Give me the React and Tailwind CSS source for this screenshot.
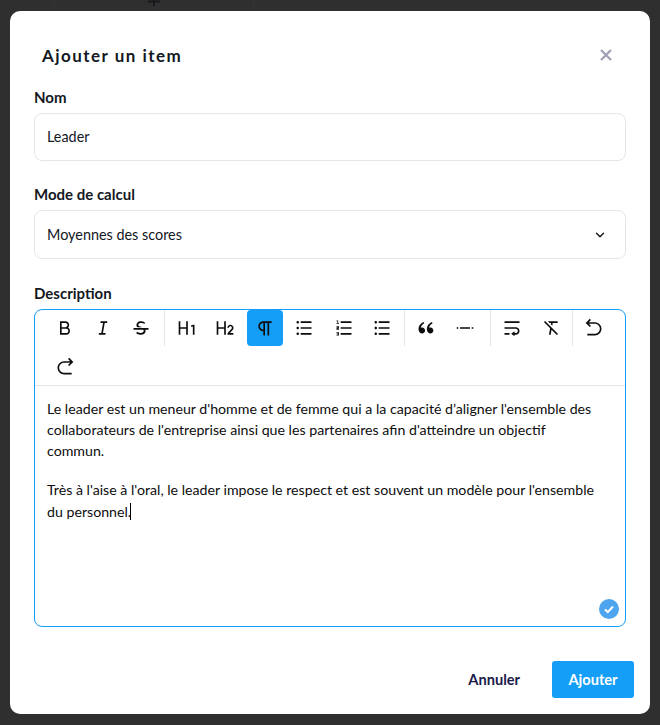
import React from "react";
import {
  RiBold, RiItalic, RiStrikethrough, RiH1, RiH2, RiParagraph, RiListUnordered, RiListOrdered,
  RiDoubleQuotesL, RiSeparator, RiTextWrap, RiFormatClear, RiArrowGoBackLine, RiArrowGoForwardLine,
} from "react-icons/ri";
import { ChevronDown } from "lucide-react";

const Btn = ({ Icon, active, className = "" }) => (
  <button className={`flex h-9 w-9 items-center justify-center rounded-[4px] text-[#0d0d0d] ${active ? "bg-[#159ef7]" : ""} ${className}`}>
    <Icon size={20} />
  </button>
);
const Sep = ({ className = "" }) => <div className={`h-9 w-px bg-[#e5e5e5] ${className}`} />;

export default function App() {
  return (
    <div className="relative h-[725px] w-[660px] overflow-hidden bg-[#2f2f2f] px-[10px] pt-[11px] font-['Lato',sans-serif] text-[#14181f]">
      <div className="absolute left-[54px] top-0 h-[11px] w-px bg-[#343434]" />
      <div className="absolute left-[253px] top-0 h-[11px] w-px bg-[#343434]" />
      <svg width="12" height="6" viewBox="0 0 12 6" className="absolute left-[148px] top-0 text-[#17191c]">
        <path d="M6 0v6M0 1.5h12" stroke="currentColor" strokeWidth="2" />
      </svg>
      <div className="h-[703px] w-[640px] rounded-[10px] bg-white px-6">
        <div className="flex h-[69px] items-center justify-between pl-2 pr-[14px] pt-[20px]">
          <h2 className="text-[17px] font-bold tracking-[1.47px]">Ajouter un item</h2>
          <svg width="12" height="12" viewBox="0 0 12 12" className="mt-[-1px] text-[#a1a1b8]">
            <path d="M1 1l10 10M11 1L1 11" stroke="currentColor" strokeWidth="2.4" />
          </svg>
        </div>
        <label className="mt-[7px] block text-[15px] font-bold leading-5">Nom</label>
        <div className="mt-[6px] flex h-12 items-center rounded-lg border border-[#e6e6e6] px-3 text-[14.4px]">Leader</div>
        <label className="mt-[23px] block text-[15px] font-bold leading-5">Mode de calcul</label>
        <div className="mt-[6px] flex h-[49px] items-center justify-between rounded-lg border border-[#e6e6e6] pl-3 pr-[18px] text-[14.4px]">
          Moyennes des scores
          <ChevronDown size={14} strokeWidth={2.5} />
        </div>
        <label className="mt-6 block text-[15px] font-bold leading-5">Description</label>
        <div className="relative mt-[6px] h-[318px] rounded-lg border border-[#159ef7]">
          <div className="flex flex-wrap gap-y-[2px] border-b border-[#e5e5e5] pl-3">
            <Btn Icon={RiBold} />
            <Btn Icon={RiItalic} className="ml-[2px]" />
            <Btn Icon={RiStrikethrough} className="ml-[2px]" />
            <Sep className="ml-[5px] mr-[4px]" />
            <Btn Icon={RiH1} />
            <Btn Icon={RiH2} className="ml-[2px]" />
            <Btn Icon={RiParagraph} active className="ml-[4px]" />
            <Btn Icon={RiListUnordered} className="ml-[3px]" />
            <Btn Icon={RiListOrdered} className="ml-[4px]" />
            <Btn Icon={RiListUnordered} className="ml-[2px]" />
            <Sep className="ml-[4px] mr-[3px]" />
            <Btn Icon={RiDoubleQuotesL} />
            <Btn Icon={RiSeparator} className="ml-[3px]" />
            <Sep className="ml-[7px] mr-[3px]" />
            <Btn Icon={RiTextWrap} />
            <Btn Icon={RiFormatClear} className="ml-[3px]" />
            <Sep className="ml-[3px] mr-[3px]" />
            <Btn Icon={RiArrowGoBackLine} />
            <Btn Icon={RiArrowGoForwardLine} className="mt-[1px]" />
          </div>
          <div className="pl-3 pr-[24px] pt-[12px] text-[14.18px] leading-[21px] text-[#0d0d0d]">
            <p>Le leader est un meneur d'homme et de femme qui a la capacité d’aligner l'ensemble des collaborateurs de l'entreprise ainsi que les partenaires afin d'atteindre un objectif commun.</p>
            <p className="mt-[18px]">Très à l'aise à l'oral, le leader impose le respect et est souvent un modèle pour l'ensemble du personnel.<span className="ml-[-1px] inline-block h-[17px] w-px translate-y-[3px] bg-black" /></p>
          </div>
          <div className="absolute bottom-[7px] right-[6px] flex h-5 w-5 items-center justify-center rounded-full bg-[#4ea5ef]">
            <svg width="12" height="12" viewBox="0 0 12 12"><path d="M2 6.5l2.8 2.6L10 3.5" fill="none" stroke="white" strokeWidth="2" /></svg>
          </div>
        </div>
        <div className="mr-[-8px] mt-[34px] flex items-center justify-end gap-[19px] text-[14.6px] font-bold">
          <button className="px-[13px] text-[#1a1a4b]">Annuler</button>
          <button className="flex h-[37px] w-[82px] items-center justify-center rounded-[3px] bg-[#159ef7] text-white">Ajouter</button>
        </div>
      </div>
    </div>
  );
}
